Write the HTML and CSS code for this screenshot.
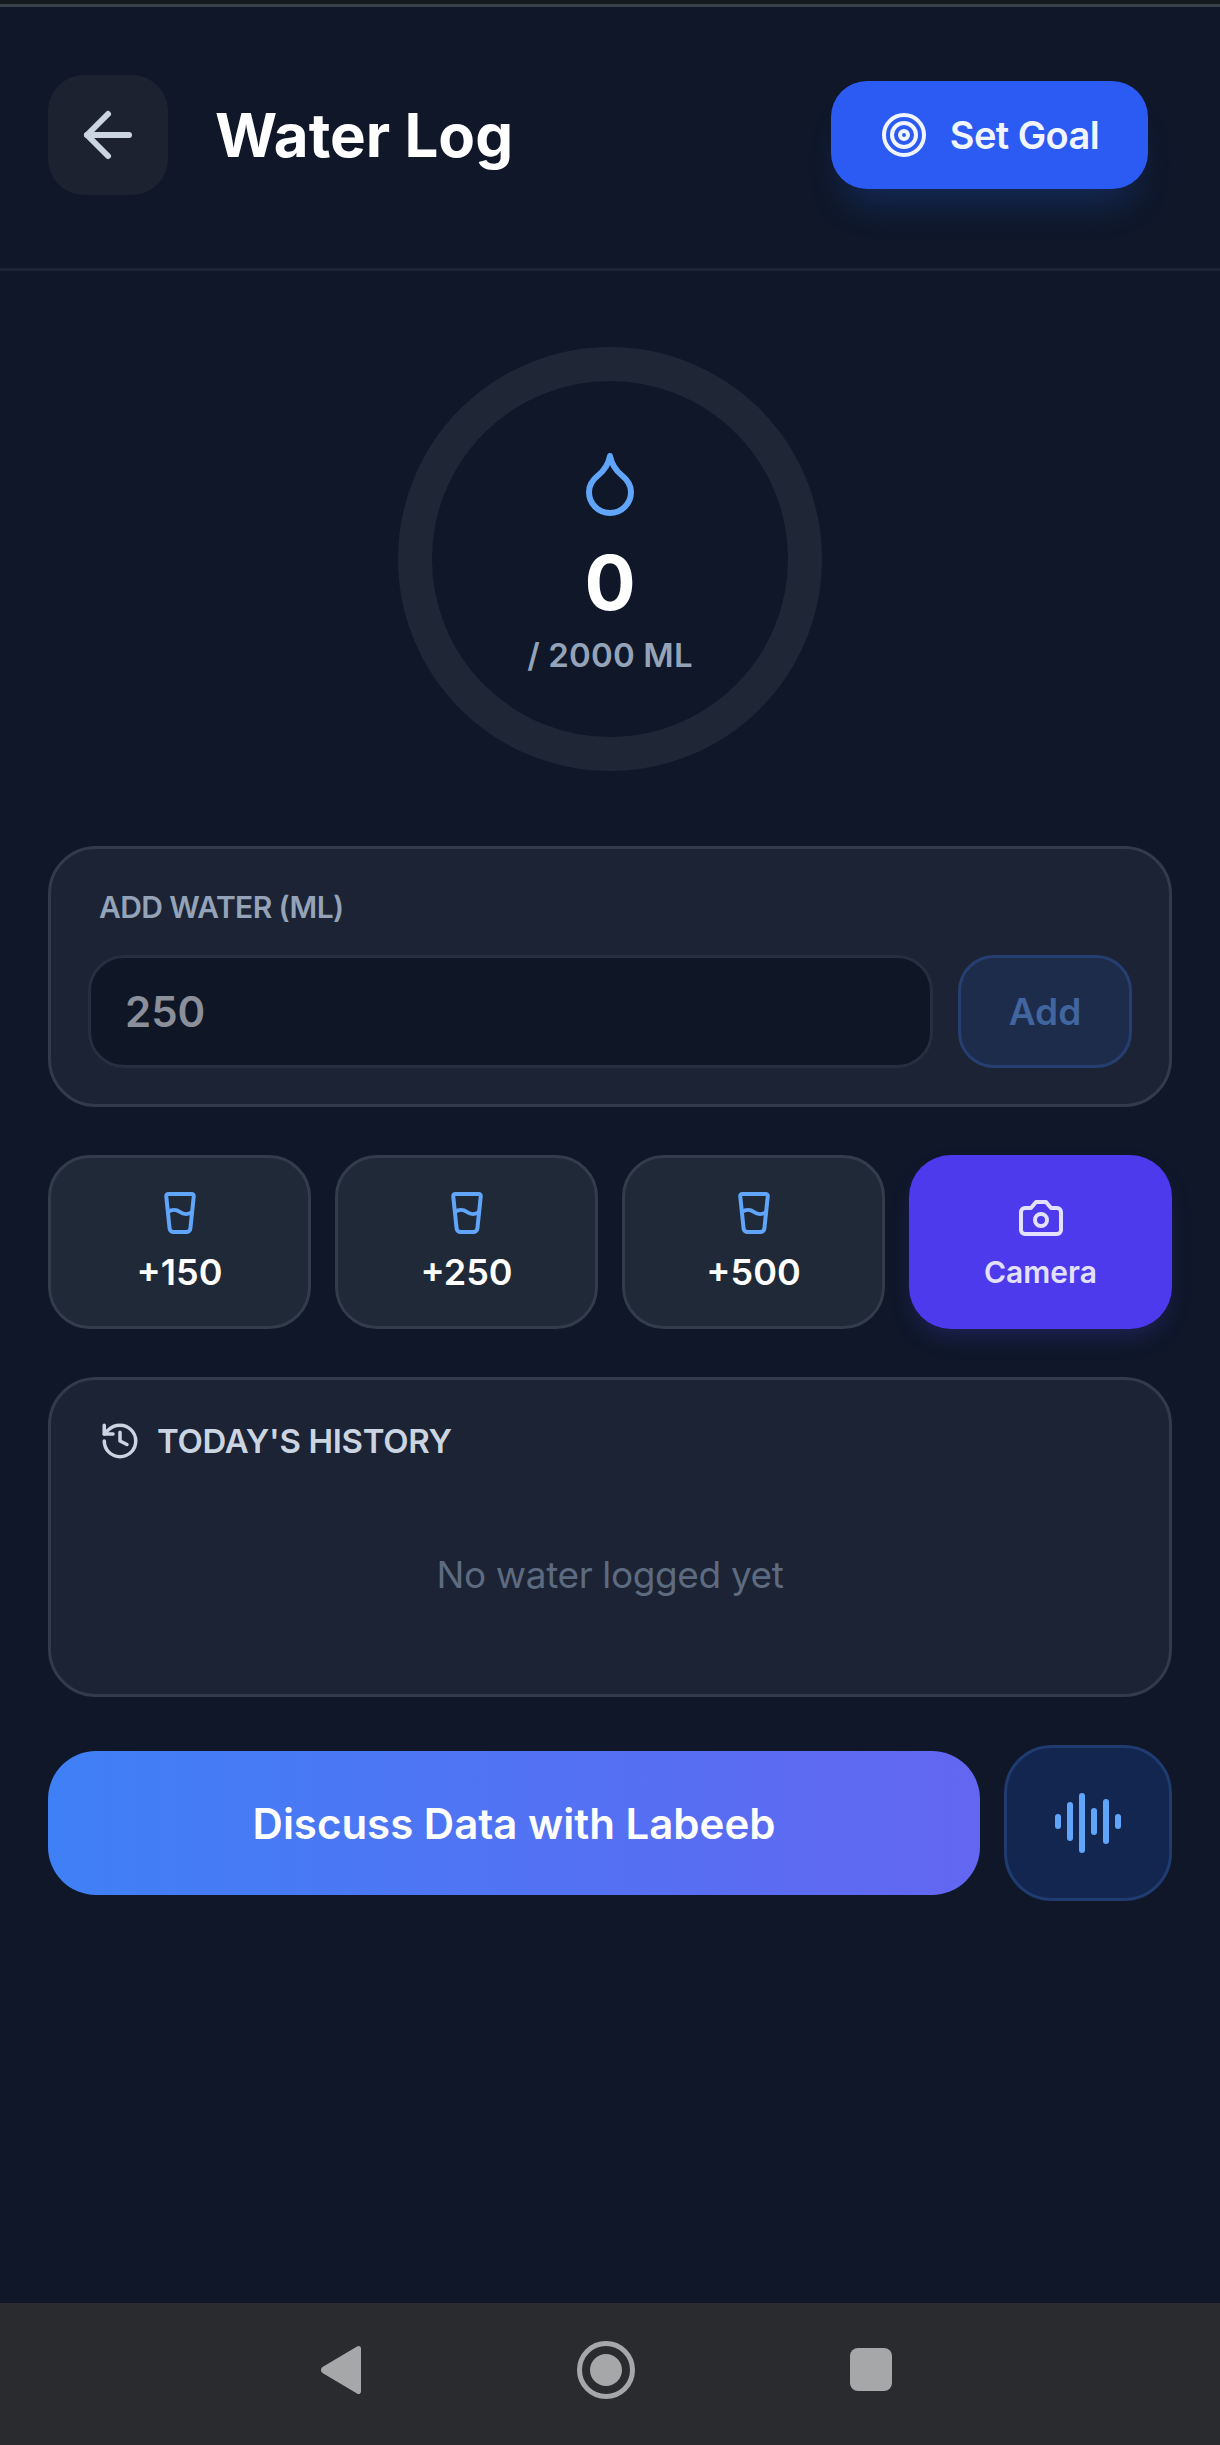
FILE: index.html
```html
<!DOCTYPE html>
<html lang="en">
<head>
<meta charset="utf-8">
<title>Water Log</title>
<link rel="stylesheet" href="styles.css">
</head>
<body>
<div class="app">
  <div class="topline"></div>
  <header class="header">
    <button class="back" aria-label="Back">
      <svg class="ico ico-72" viewBox="0 0 24 24"><path d="m12 19-7-7 7-7"/><path d="M19 12H5"/></svg>
    </button>
    <h1 class="title">Water Log</h1>
    <button class="goal">
      <svg class="ico ico-48" viewBox="0 0 24 24"><circle cx="12" cy="12" r="10"/><circle cx="12" cy="12" r="6"/><circle cx="12" cy="12" r="2"/></svg>
      <span>Set Goal</span>
    </button>
  </header>
  <main class="main">
    <section class="ring">
      <svg class="ico ico-72 blue" viewBox="0 0 24 24"><path d="M12 22a7 7 0 0 0 7-7c0-2-1-3.9-3-5.5s-3.5-4-4-6.5c-.5 2.5-2 4.9-4 6.5C6 11.1 5 13 5 15a7 7 0 0 0 7 7z"/></svg>
      <div class="count">0</div>
      <div class="goal-text">/ 2000 ML</div>
    </section>

    <section class="card add-card">
      <label class="add-label">ADD WATER (ML)</label>
      <div class="add-row">
        <div class="input">250</div>
        <button class="add-btn">Add</button>
      </div>
    </section>

    <section class="quick">
      <button class="quick-btn">
        <svg class="ico ico-48 blue" viewBox="0 0 24 24"><path d="M5.116 4.104A1 1 0 0 1 6.11 3h11.78a1 1 0 0 1 .994 1.105L17.19 20.21A2 2 0 0 1 15.2 22H8.8a2 2 0 0 1-2-1.79z"/><path d="M6 12a5 5 0 0 1 6 0 5 5 0 0 0 6 0"/></svg>
        <span>+150</span>
      </button>
      <button class="quick-btn">
        <svg class="ico ico-48 blue" viewBox="0 0 24 24"><path d="M5.116 4.104A1 1 0 0 1 6.11 3h11.78a1 1 0 0 1 .994 1.105L17.19 20.21A2 2 0 0 1 15.2 22H8.8a2 2 0 0 1-2-1.79z"/><path d="M6 12a5 5 0 0 1 6 0 5 5 0 0 0 6 0"/></svg>
        <span>+250</span>
      </button>
      <button class="quick-btn">
        <svg class="ico ico-48 blue" viewBox="0 0 24 24"><path d="M5.116 4.104A1 1 0 0 1 6.11 3h11.78a1 1 0 0 1 .994 1.105L17.19 20.21A2 2 0 0 1 15.2 22H8.8a2 2 0 0 1-2-1.79z"/><path d="M6 12a5 5 0 0 1 6 0 5 5 0 0 0 6 0"/></svg>
        <span>+500</span>
      </button>
      <button class="quick-btn camera">
        <svg class="ico ico-48" viewBox="0 0 24 24"><path d="M14.5 4h-5L7 7H4a2 2 0 0 0-2 2v9a2 2 0 0 0 2 2h16a2 2 0 0 0 2-2V9a2 2 0 0 0-2-2h-3l-2.5-3z"/><circle cx="12" cy="13" r="3"/></svg>
        <span>Camera</span>
      </button>
    </section>

    <section class="card history">
      <div class="history-head">
        <svg class="ico ico-42" viewBox="0 0 24 24"><path d="M3 12a9 9 0 1 0 9-9 9.75 9.75 0 0 0-6.74 2.74L3 8"/><path d="M3 3v5h5"/><path d="M12 7v5l4 2"/></svg>
        <h2 class="history-title">TODAY'S HISTORY</h2>
      </div>
      <p class="empty">No water logged yet</p>
    </section>

    <section class="actions">
      <button class="discuss">Discuss Data with Labeeb</button>
      <button class="voice" aria-label="Voice">
        <svg class="ico ico-72 blue" viewBox="0 0 24 24"><path d="M2 10v3"/><path d="M6 6v11"/><path d="M10 3v18"/><path d="M14 8v7"/><path d="M18 5v13"/><path d="M22 10v3"/></svg>
      </button>
    </section>
  </main>
  <nav class="sysnav">
    <svg class="nav-ico" viewBox="0 0 40 50"><path d="M36 1.500c2-1.500 4 0 4 2v43c0 2-2 3.500-4 2L1.500 28c-2-1.500-2-4.500 0-6z"/></svg>
    <svg class="nav-ico" viewBox="0 0 58 58"><circle cx="29" cy="29" r="26.500" class="nav-ring"/><circle cx="29" cy="29" r="16"/></svg>
    <svg class="nav-ico" viewBox="0 0 42 43"><rect width="42" height="43" rx="8"/></svg>
  </nav>
</div>
</body>
</html>
```
FILE: styles.css
```css
* { box-sizing: border-box; }
html, body { margin: 0; padding: 0; }
body {
  background: #0f1729;
  font-family: Inter, "Noto Sans", sans-serif;
  color: #fff;
}
button { font-family: inherit; border: 0; padding: 0; margin: 0; color: inherit; }
h1, h2, p { margin: 0; }

.app { width: 1220px; height: 2445px; display: flex; flex-direction: column; overflow: hidden; }
.topline { height: 7px; flex: none; background: #14181f; border-bottom: 3px solid #3a4049; }

.ico { fill: none; stroke: currentColor; stroke-width: 2; stroke-linecap: round; stroke-linejoin: round; flex: none; display: block; }
.ico-72 { width: 72px; height: 72px; }
.ico-48 { width: 48px; height: 48px; }
.ico-42 { width: 42px; height: 42px; }
.blue { color: #60a5fa; }

.header {
  flex: none;
  height: 264px;
  display: flex;
  align-items: center;
  padding: 0 72px 6px 48px;
  border-bottom: 3px solid #1d2535;
}
.back {
  width: 120px; height: 120px;
  border-radius: 36px;
  background: #1c2230;
  color: #cbd5e1;
  display: flex; align-items: center; justify-content: center;
  flex: none;
}
.title {
  margin-left: 47px;
  font-size: 60px;
  font-weight: 700;
  letter-spacing: 0;
  line-height: 1;
  flex: 1;
}
.goal {
  width: 317px; height: 108px;
  border-radius: 36px;
  background: #2b5bf2;
  box-shadow: 0 28px 36px -14px rgba(37, 99, 235, 0.24);
  display: flex; align-items: center; justify-content: center;
  gap: 22px;
  font-size: 38px;
  font-weight: 600;
  letter-spacing: -0.015em;
  color: #f1f5ff;
}

.main { flex: 1; padding: 76px 48px 0; display: flex; flex-direction: column; }

.ring {
  align-self: center;
  width: 424px; height: 424px;
  border-radius: 50%;
  border: 34px solid #1f2737;
  display: flex; flex-direction: column; align-items: center;
}
.ring .ico { margin-top: 66px; }
.count { font-size: 76px; font-weight: 700; line-height: 76px; margin-top: 25px; }
.goal-text { font-size: 33px; font-weight: 600; line-height: 40px; letter-spacing: 0.005em; color: #94a3b8; margin-top: 15px; }

.card {
  background: #1c2334;
  border: 3px solid #333b4b;
  border-radius: 48px;
}
.add-card { margin-top: 75px; height: 261px; padding: 40px 37px 0; }
.add-label { display: block; font-size: 30px; font-weight: 600; line-height: 36px; margin-left: 11px; color: #94a3b8; letter-spacing: -0.02em; }
.add-row { display: flex; gap: 25px; margin-top: 30px; height: 113px; }
.input {
  flex: 1;
  background: #0f1727;
  border: 3px solid #272e3e;
  border-radius: 36px;
  display: flex; align-items: center;
  padding-left: 34px;
  font-size: 42px; font-weight: 600;
  color: #8b8f9a;
}
.add-btn {
  width: 174px;
  background: #1e2c4b;
  border: 3px solid #263f71;
  border-radius: 36px;
  font-size: 37px; font-weight: 600;
  color: #41659f;
}

.quick { margin-top: 48px; display: grid; grid-template-columns: repeat(4, 1fr); gap: 24px; }
.quick-btn {
  height: 174px;
  background: #1f2937;
  border: 3px solid #333c4b;
  border-radius: 42px;
  display: flex; flex-direction: column; align-items: center; justify-content: center;
  gap: 15px;
  font-size: 36px; font-weight: 600;
  line-height: 42px;
  padding-bottom: 3px;
  color: #fff;
}
.camera {
  background: #4c3aec;
  border: 0;
  box-shadow: 0 12px 24px -6px rgba(79, 70, 229, 0.25);
  font-size: 30px;
  line-height: 36px;
  color: #e4e1ff;
  gap: 12px;
  padding-bottom: 0;
}

.history { margin-top: 48px; height: 320px; padding: 40px 48px 0; }
.history-head { display: flex; align-items: center; gap: 16px; }
.history-head .ico { color: #cbd5e1; }
.history-title { font-size: 33px; font-weight: 600; color: #cbd5e1; letter-spacing: -0.01em; line-height: 42px; }
.empty { text-align: center; font-size: 37px; color: #5d6b80; margin-top: 91px; line-height: 44px; letter-spacing: -0.01em; }

.actions { margin-top: 48px; display: flex; align-items: center; gap: 24px; }
.discuss {
  flex: 1;
  height: 144px;
  border-radius: 48px;
  background: linear-gradient(90deg, #3f80f6, #6366f1);
  font-size: 42px; font-weight: 600;
  letter-spacing: 0;
  color: #fff;
}
.voice {
  width: 168px; height: 156px;
  border-radius: 48px;
  background: #12264f;
  border: 3px solid #1f3b70;
  display: flex; align-items: center; justify-content: center;
  flex: none;
}

.sysnav {
  flex: none;
  height: 142px;
  background: #2a2b2f;
  display: grid;
  grid-template-columns: repeat(3, 265px);
  justify-content: center;
  justify-items: center;
  align-items: center;
  padding: 0 8px 9px 0;
}
.nav-ico { fill: #a6a7a9; display: block; }
.nav-ico:nth-child(1) { width: 40px; height: 50px; }
.nav-ico:nth-child(2) { width: 58px; height: 58px; }
.nav-ico:nth-child(3) { width: 42px; height: 43px; }
.nav-ring { fill: none; stroke: #a6a7a9; stroke-width: 5; }
```
